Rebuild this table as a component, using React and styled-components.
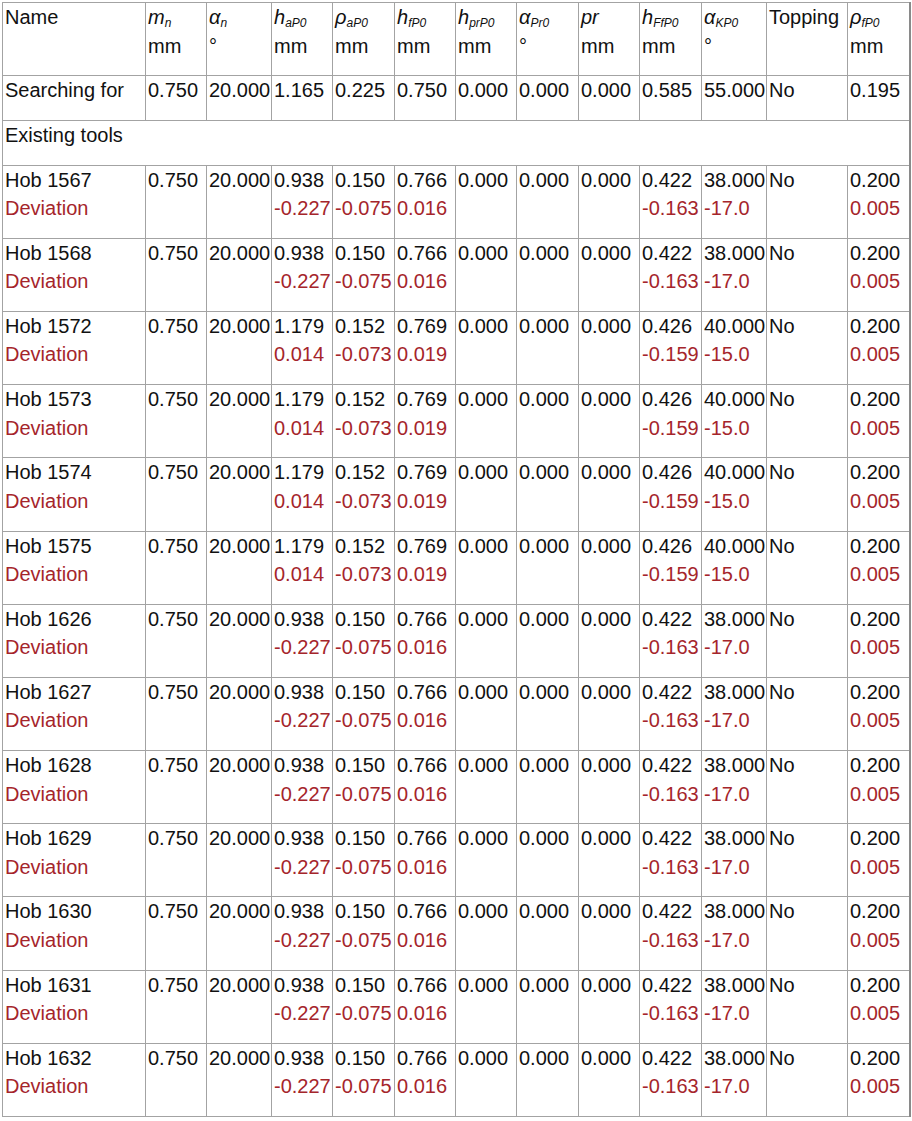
import React from 'react';
import styled, { createGlobalStyle } from 'styled-components';

const GlobalStyle = createGlobalStyle`
  html, body {
    margin: 0;
    padding: 0;
    background: #fff;
  }
  body {
    font-family: "Liberation Sans", Arial, sans-serif;
    color: #111;
  }
`;

const Page = styled.div`
  padding: 2px 0 0 2px;
`;

const Table = styled.table`
  border-collapse: collapse;
  table-layout: fixed;
  width: 907px;
  font-size: 20px;
  line-height: 28.5px;
  border-right: 2px solid #8a8a8a;
`;

const Cell = styled.td`
  border: 1px solid #a3a3a3;
  padding: 0 2px 15.2px 2px;
  vertical-align: top;
  white-space: nowrap;
  overflow: visible;
  text-align: left;
`;

const HeadCell = styled(Cell).attrs({ as: 'th' })`
  font-weight: normal;
`;

const Line = styled.div`
  height: 28.5px;
  color: ${(p) => (p.$dev ? '#a5252b' : '#111')};
`;

const Sym = styled.span`
  font-style: italic;
`;

const Sub = styled.sub`
  font-style: italic;
  font-size: 12px;
  line-height: 0;
  vertical-align: -3px;
`;

const widths = [143, 61, 65, 61, 62, 61, 61, 62, 61, 62, 65, 81, 62];

const headers = [
  { sym: null, label: 'Name' },
  { sym: 'm', sub: 'n', unit: 'mm' },
  { sym: 'α', sub: 'n', unit: '°' },
  { sym: 'h', sub: 'aP0', unit: 'mm' },
  { sym: 'ρ', sub: 'aP0', unit: 'mm' },
  { sym: 'h', sub: 'fP0', unit: 'mm' },
  { sym: 'h', sub: 'prP0', unit: 'mm' },
  { sym: 'α', sub: 'Pr0', unit: '°' },
  { sym: 'pr', sub: '', unit: 'mm' },
  { sym: 'h', sub: 'FfP0', unit: 'mm' },
  { sym: 'α', sub: 'KP0', unit: '°' },
  { sym: null, label: 'Topping' },
  { sym: 'ρ', sub: 'fP0', unit: 'mm' },
];

const searching = ['Searching for', '0.750', '20.000', '1.165', '0.225', '0.750', '0.000', '0.000', '0.000', '0.585', '55.000', 'No', '0.195'];

const toolA = {
  values: ['0.750', '20.000', '0.938', '0.150', '0.766', '0.000', '0.000', '0.000', '0.422', '38.000', 'No', '0.200'],
  devs: ['', '', '-0.227', '-0.075', '0.016', '', '', '', '-0.163', '-17.0', '', '0.005'],
};

const toolB = {
  values: ['0.750', '20.000', '1.179', '0.152', '0.769', '0.000', '0.000', '0.000', '0.426', '40.000', 'No', '0.200'],
  devs: ['', '', '0.014', '-0.073', '0.019', '', '', '', '-0.159', '-15.0', '', '0.005'],
};

const tools = [
  ['Hob 1567', toolA],
  ['Hob 1568', toolA],
  ['Hob 1572', toolB],
  ['Hob 1573', toolB],
  ['Hob 1574', toolB],
  ['Hob 1575', toolB],
  ['Hob 1626', toolA],
  ['Hob 1627', toolA],
  ['Hob 1628', toolA],
  ['Hob 1629', toolA],
  ['Hob 1630', toolA],
  ['Hob 1631', toolA],
  ['Hob 1632', toolA],
];

export default function App() {
  return (
    <Page>
      <GlobalStyle />
      <Table>
        <colgroup>
          {widths.map((w, i) => (
            <col key={i} style={{ width: w }} />
          ))}
        </colgroup>
        <thead>
          <tr>
            {headers.map((h, i) => (
              <HeadCell key={i}>
                {h.sym ? (
                  <>
                    <Line>
                      <Sym>{h.sym}</Sym>
                      {h.sub && <Sub>{h.sub}</Sub>}
                    </Line>
                    <Line>{h.unit}</Line>
                  </>
                ) : (
                  <Line>{h.label}</Line>
                )}
              </HeadCell>
            ))}
          </tr>
        </thead>
        <tbody>
          <tr>
            {searching.map((v, i) => (
              <Cell key={i}>
                <Line>{v}</Line>
              </Cell>
            ))}
          </tr>
          <tr>
            <Cell colSpan={13}>
              <Line>Existing tools</Line>
            </Cell>
          </tr>
          {tools.map(([name, t]) => (
            <tr key={name}>
              <Cell>
                <Line>{name}</Line>
                <Line $dev>Deviation</Line>
              </Cell>
              {t.values.map((v, i) => (
                <Cell key={i}>
                  <Line>{v}</Line>
                  <Line $dev>{t.devs[i]}</Line>
                </Cell>
              ))}
            </tr>
          ))}
        </tbody>
      </Table>
    </Page>
  );
}
